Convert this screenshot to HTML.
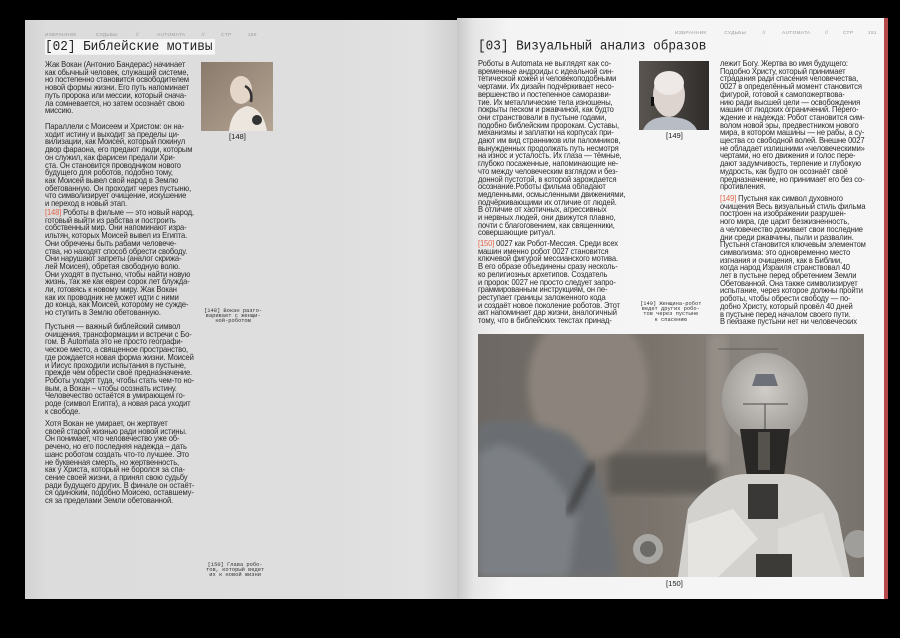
<!DOCTYPE html>
<html><head><meta charset="utf-8"><style>
*{margin:0;padding:0;box-sizing:border-box}
body{width:900px;height:638px;background:#000;position:relative;overflow:hidden;font-family:"Liberation Sans","DejaVu Sans",sans-serif;color:#2a2a2a}
.pl{position:absolute;left:25px;top:20px;width:432px;height:579px;background:linear-gradient(90deg,#d2d2d2 0%,#dcdcdc 5%,#dedede 70%,#e2e2e2 92%,#cfcfcf 100%)}
.pr{position:absolute;left:457px;top:18px;width:431px;height:581px;background:linear-gradient(90deg,#c8c8c8 0%,#e6e6e6 4%,#f4f4f4 12%,#f6f6f6 100%);border-right:4px solid #b44a4a}
.t{position:absolute;font-size:8.4px;line-height:7.7px;white-space:nowrap;letter-spacing:-0.15px;transform:scaleX(0.905);transform-origin:0 0}
.hd{position:absolute;font-size:4.8px;color:#999;white-space:nowrap;letter-spacing:0.3px;font-family:"Liberation Sans",sans-serif}
.ti{position:absolute;font-family:"Liberation Mono","DejaVu Sans Mono",monospace;font-size:12.7px;white-space:nowrap;color:#222;transform:scaleY(1.12);transform-origin:0 0}
.r{color:#e0664a}
.note{position:absolute;font-family:"Liberation Mono",monospace;font-size:5.4px;line-height:5.2px;text-align:center;white-space:nowrap;color:#333}
.cap{position:absolute;font-size:7.6px;color:#222}
</style></head><body>
<div class="pl"></div>
<div class="pr"></div>

<div class="hd" style="left:45px;top:33px">ИЗБРАННИК&nbsp;&nbsp;&nbsp;&nbsp;&nbsp;&nbsp;&nbsp;&nbsp;&nbsp;&nbsp;&nbsp;&nbsp;СУДЬБЫ&nbsp;&nbsp;&nbsp;&nbsp;&nbsp;&nbsp;&nbsp;&nbsp;&nbsp;&nbsp;&nbsp;//&nbsp;&nbsp;&nbsp;&nbsp;&nbsp;&nbsp;&nbsp;&nbsp;&nbsp;&nbsp;&nbsp;AUTOMATA&nbsp;&nbsp;&nbsp;&nbsp;&nbsp;&nbsp;&nbsp;&nbsp;&nbsp;&nbsp;//&nbsp;&nbsp;&nbsp;&nbsp;&nbsp;&nbsp;&nbsp;&nbsp;&nbsp;&nbsp;СТР&nbsp;&nbsp;&nbsp;&nbsp;&nbsp;&nbsp;&nbsp;&nbsp;&nbsp;&nbsp;150</div>
<div class="ti" style="left:45px;top:39px;background:#f6f6f6;padding-right:2px;height:14px;line-height:14px">[02] Библейские мотивы</div>

<div class="t" style="left:45px;top:61px">Жак Вокан (Антонио Бандерас) начинает<br>как обычный человек, служащий системе,<br>но постепенно становится освободителем<br>новой формы жизни. Его путь напоминает<br>путь пророка или мессии, который снача-<br>ла сомневается, но затем осознаёт свою<br>миссию.</div>
<div class="t" style="left:45px;top:123px">Параллели с Моисеем и Христом: он на-<br>ходит истину и выходит за пределы ци-<br>вилизации, как Моисей, который покинул<br>двор фараона, его предают люди, которым<br>он служил, как фарисеи предали Хри-<br>ста. Он становится проводником нового<br>будущего для роботов, подобно тому,<br>как Моисей вывел свой народ в Землю<br>обетованную. Он проходит через пустыню,<br>что символизирует очищение, искушение<br>и переход в новый этап.</div>
<div class="t" style="left:45px;top:209px"><span class="r">[148]</span> Роботы в фильме — это новый народ,<br>готовый выйти из рабства и построить<br>собственный мир. Они напоминают изра-<br>ильтян, которых Моисей вывел из Египта.<br>Они обречены быть рабами человече-<br>ства, но находят способ обрести свободу.<br>Они нарушают запреты (аналог скрижа-<br>лей Моисея), обретая свободную волю.<br>Они уходят в пустыню, чтобы найти новую<br>жизнь, так же как евреи сорок лет блужда-<br>ли, готовясь к новому миру. Жак Вокан<br>как их проводник не может идти с ними<br>до конца, как Моисей, которому не сужде-<br>но ступить в Землю обетованную.</div>
<div class="t" style="left:45px;top:323px">Пустыня — важный библейский символ<br>очищения, трансформации и встречи с Бо-<br>гом. В Automata это не просто географи-<br>ческое место, а священное пространство,<br>где рождается новая форма жизни. Моисей<br>и Иисус проходили испытания в пустыне,<br>прежде чем обрести своё предназначение.<br>Роботы уходят туда, чтобы стать чем-то но-<br>вым, а Вокан – чтобы осознать истину.<br>Человечество остаётся в умирающем го-<br>роде (символ Египта), а новая раса уходит<br>к свободе.</div>
<div class="t" style="left:45px;top:420px">Хотя Вокан не умирает, он жертвует<br>своей старой жизнью ради новой истины.<br>Он понимает, что человечество уже об-<br>речено, но его последняя надежда – дать<br>шанс роботом создать что-то лучшее. Это<br>не буквенная смерть, но жертвенность,<br>как у Христа, который не боролся за спа-<br>сение своей жизни, а принял свою судьбу<br>ради будущего других. В финале он остаёт-<br>ся одиноким, подобно Моисею, оставшему-<br>ся за пределами Земли обетованной.</div>

<svg style="position:absolute;left:201px;top:62px" width="72" height="69" viewBox="0 0 72 69">
<defs><linearGradient id="s1" x1="0" y1="0" x2="1" y2="1"><stop offset="0" stop-color="#8a7a6c"/><stop offset="1" stop-color="#b5a594"/></linearGradient></defs>
<rect width="72" height="69" fill="url(#s1)"/>
<ellipse cx="40" cy="28" rx="11" ry="14" fill="#e4d6c8"/>
<path d="M28 69 Q30 48 46 44 Q62 46 66 69Z" fill="#ece6de"/>
<circle cx="56" cy="58" r="5" fill="#333"/>
<path d="M44 24 Q52 28 50 40" stroke="#333" stroke-width="2.5" fill="none"/>
</svg>
<div class="cap" style="left:229px;top:132px">[148]</div>
<div class="note" style="left:204px;top:309px">[148] Вокан разго-<br>варивает с женщи-<br>ной-роботом</div>
<div class="note" style="left:206px;top:563px">[150] Глава робо-<br>тов, который ведет<br>их к новой жизни</div>

<div class="hd" style="left:675px;top:31px">ИЗБРАННИК&nbsp;&nbsp;&nbsp;&nbsp;&nbsp;&nbsp;&nbsp;&nbsp;&nbsp;&nbsp;&nbsp;СУДЬБЫ&nbsp;&nbsp;&nbsp;&nbsp;&nbsp;&nbsp;&nbsp;&nbsp;&nbsp;&nbsp;//&nbsp;&nbsp;&nbsp;&nbsp;&nbsp;&nbsp;&nbsp;&nbsp;&nbsp;&nbsp;AUTOMATA&nbsp;&nbsp;&nbsp;&nbsp;&nbsp;&nbsp;&nbsp;&nbsp;&nbsp;//&nbsp;&nbsp;&nbsp;&nbsp;&nbsp;&nbsp;&nbsp;&nbsp;&nbsp;СТР&nbsp;&nbsp;&nbsp;&nbsp;&nbsp;&nbsp;&nbsp;&nbsp;&nbsp;151</div>
<div class="ti" style="left:478px;top:37px">[03] Визуальный анализ образов</div>

<div class="t" style="left:478px;top:60px">Роботы в Automata не выглядят как со-<br>временные андроиды с идеальной син-<br>тетической кожей и человекоподобными<br>чертами. Их дизайн подчёркивает несо-<br>вершенство и постепенное саморазви-<br>тие. Их металлические тела изношены,<br>покрыты песком и ржавчиной, как будто<br>они странствовали в пустыне годами,<br>подобно библейским пророкам. Суставы,<br>механизмы и заплатки на корпусах при-<br>дают им вид странников или паломников,<br>вынужденных продолжать путь несмотря<br>на износ и усталость. Их глаза — тёмные,<br>глубоко посаженные, напоминающие не-<br>что между человеческим взглядом и без-<br>донной пустотой, в которой зарождается<br>осознание.Роботы фильма обладают<br>медленными, осмысленными движениями,<br>подчёркивающими их отличие от людей.<br>В отличие от хаотичных, агрессивных<br>и нервных людей, они движутся плавно,<br>почти с благоговением, как священники,<br>совершающие ритуал.</div>
<div class="t" style="left:478px;top:240px"><span class="r">[150]</span> 0027 как Робот-Мессия. Среди всех<br>машин именно робот 0027 становится<br>ключевой фигурой мессианского мотива.<br>В его образе объединены сразу несколь-<br>ко религиозных архетипов. Создатель<br>и пророк: 0027 не просто следует запро-<br>граммированным инструкциям, он пе-<br>реступает границы заложенного кода<br>и создаёт новое поколение роботов. Этот<br>акт напоминает дар жизни, аналогичный<br>тому, что в библейских текстах принад-</div>

<svg style="position:absolute;left:639px;top:61px" width="70" height="69" viewBox="0 0 70 69">
<defs><linearGradient id="s2" x1="0" y1="0" x2="1" y2="0"><stop offset="0" stop-color="#5a5550"/><stop offset="1" stop-color="#2f2c2a"/></linearGradient></defs>
<rect width="70" height="69" fill="url(#s2)"/>
<ellipse cx="30" cy="34" rx="16" ry="22" fill="#ddd3cf"/>
<ellipse cx="30" cy="22" rx="15" ry="12" fill="#eee9e6"/>
<path d="M4 69 Q10 55 30 56 Q52 56 58 69Z" fill="#b8bcc4"/>
<rect x="12" y="36" width="3" height="9" fill="#111"/>
</svg>
<div class="cap" style="left:666px;top:131px">[149]</div>
<div class="note" style="left:640px;top:302px">[149] Женщина-робот<br>ведет других робо-<br>тов через пустыне<br>к спасению</div>

<div class="t" style="left:720px;top:60px">лежит Богу. Жертва во имя будущего:<br>Подобно Христу, который принимает<br>страдания ради спасения человечества,<br>0027 в определённый момент становится<br>фигурой, готовой к самопожертвова-<br>нию ради высшей цели — освобождения<br>машин от людских ограничений. Перero-<br>ждение и надежда: Робот становится сим-<br>волом новой эры, предвестником нового<br>мира, в котором машины — не рабы, а су-<br>щества со свободной волей. Внешне 0027<br>не обладает излишними «человеческими»<br>чертами, но его движения и голос пере-<br>дают задумчивость, терпение и глубокую<br>мудрость, как будто он осознаёт своё<br>предназначение, но принимает его без со-<br>противления.</div>
<div class="t" style="left:720px;top:195px"><span class="r">[149]</span> Пустыня как символ духовного<br>очищения Весь визуальный стиль фильма<br>построен на изображении разрушен-<br>ного мира, где царит безжизненность,<br>а человечество доживает свои последние<br>дни среди ржавчины, пыли и развалин.<br>Пустыня становится ключевым элементом<br>символизма: это одновременно место<br>изгнания и очищения, как в Библии,<br>когда народ Израиля странствовал 40<br>лет в пустыне перед обретением Земли<br>Обетованной. Она также символизирует<br>испытание, через которое должны пройти<br>роботы, чтобы обрести свободу — по-<br>добно Христу, который провёл 40 дней<br>в пустыне перед началом своего пути.<br>В пейзаже пустыни нет ни человеческих</div>

<svg style="position:absolute;left:478px;top:334px" width="386" height="243" viewBox="0 0 386 243">
<defs>
<linearGradient id="bg" x1="0" y1="0" x2="1" y2="0"><stop offset="0" stop-color="#6d6864"/><stop offset="0.45" stop-color="#7a736c"/><stop offset="0.7" stop-color="#8a847e"/><stop offset="1" stop-color="#77726c"/></linearGradient>
<radialGradient id="hd" cx="0.5" cy="0.4" r="0.6"><stop offset="0" stop-color="#d0ccc8"/><stop offset="1" stop-color="#9a9692"/></radialGradient>
<filter id="bl"><feGaussianBlur stdDeviation="4"/></filter>
</defs>
<rect width="386" height="243" fill="url(#bg)"/>
<rect x="130" y="120" width="110" height="40" fill="#5d5a55" filter="url(#bl)"/>
<rect x="230" y="0" width="20" height="130" fill="#958f88" filter="url(#bl)"/>
<g filter="url(#bl)">
<ellipse cx="110" cy="50" rx="60" ry="75" fill="#8c847c"/>
<path d="M0 90 Q40 80 90 100 Q130 130 140 243 L0 243Z" fill="#6a6e72"/>
<path d="M20 110 Q70 120 100 180 L90 243 L0 243 L0 120Z" fill="#7c8085"/>
</g>
<path d="M90 180 Q110 140 115 130" stroke="#333" stroke-width="6" fill="none" filter="url(#bl)"/>
<ellipse cx="287" cy="65" rx="43" ry="46" fill="url(#hd)"/>
<path d="M262 95 L312 95 L305 150 L270 150Z" fill="#2a2826"/>
<rect x="280" y="98" width="12" height="38" fill="#55524e"/>
<path d="M200 243 L210 175 Q235 140 270 140 L310 140 Q345 145 360 180 L372 243Z" fill="#d4d2ce"/>
<path d="M270 150 L300 150 L300 185 L270 185Z" fill="#3a3836"/>
<path d="M210 190 L255 175 L280 205 L240 243 L210 243Z" fill="#e6e4e0"/>
<path d="M300 195 L345 178 L365 243 L300 243Z" fill="#dddbd7"/>
<rect x="278" y="220" width="36" height="23" fill="#3d3b38"/>
<circle cx="170" cy="215" r="15" fill="#a9a7a3"/><circle cx="170" cy="215" r="8" fill="#6d6b68"/>
<circle cx="380" cy="210" r="14" fill="#a09e9a"/>
<path d="M240 15 L300 15" stroke="#555" stroke-width="0.8"/>
<path d="M278 40 L296 40 L300 52 L274 52Z" fill="#6d7078"/>
<path d="M265 70 L310 70 M287 70 L287 95" stroke="#4a4a4a" stroke-width="1"/>
</svg>
<div class="cap" style="left:666px;top:579px">[150]</div>
</body></html>
